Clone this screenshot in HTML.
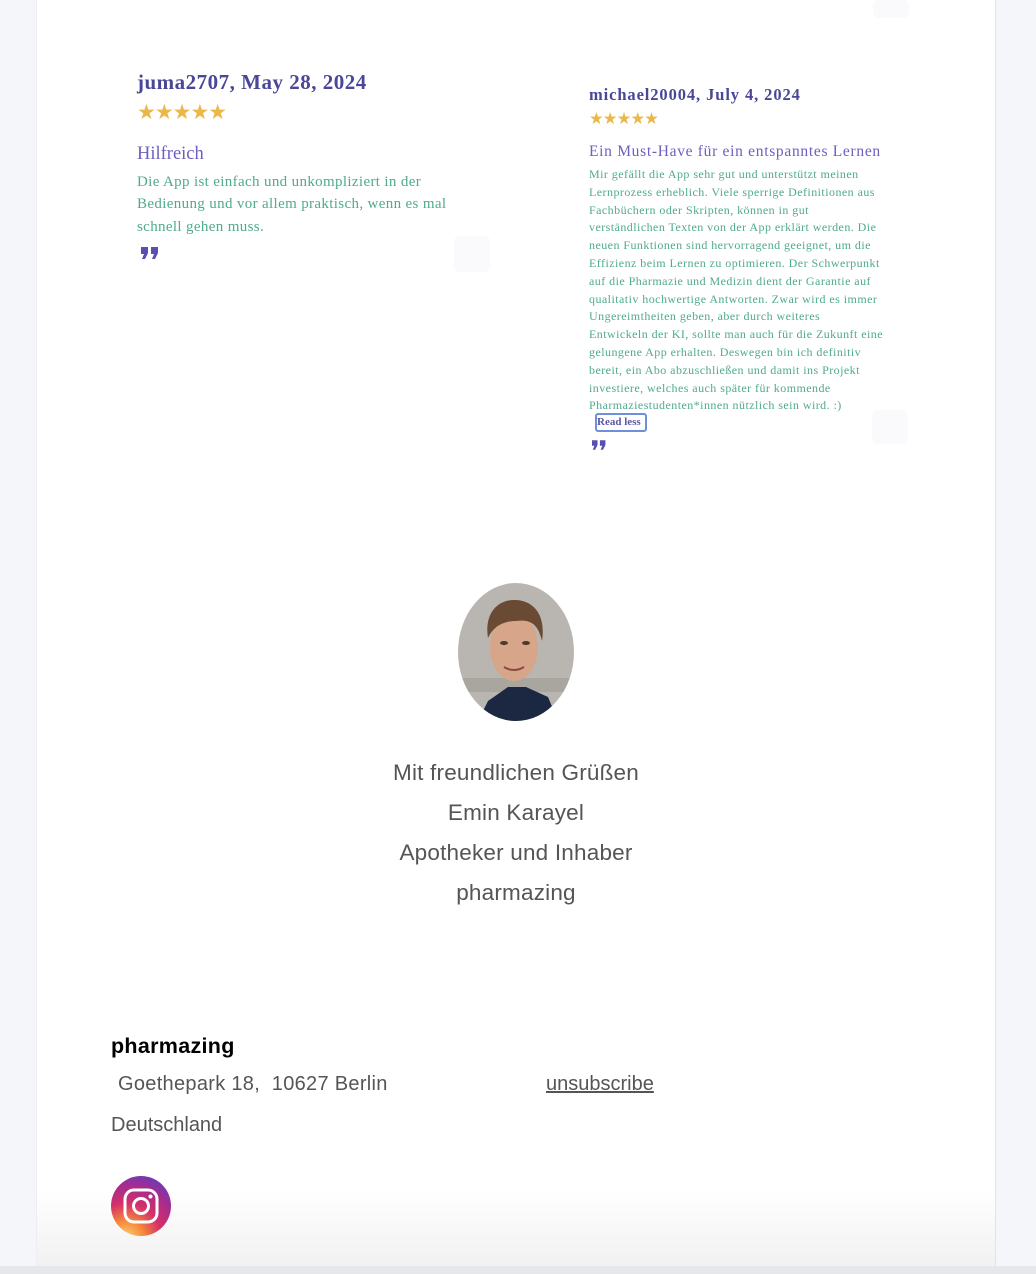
<!DOCTYPE html>
<html><head><meta charset="utf-8"><style>
*{margin:0;padding:0;box-sizing:border-box}
html,body{width:1036px;height:1274px;overflow:hidden;background:#f5f6fa;position:relative}
.main{position:absolute;left:36px;top:0;width:960px;height:1266px;background:linear-gradient(#fff 0,#fff 1190px,#f1f1f2 1266px);border-right:1px solid #e3e4ea;border-left:1px solid #eceef2}
.bar{position:absolute;left:0;top:1266px;width:1036px;height:8px;background:#e6e7eb}
.serif{font-family:"Liberation Serif",serif}
.abs{position:absolute;white-space:nowrap}
.h{color:#4a4797;font-weight:bold}
.t{color:#6b5fc0}
.g{color:#4faa8f}
.stars{color:#eab84a;letter-spacing:-1px}
.sans{font-family:"Liberation Sans",sans-serif;color:#555}
.ghost{position:absolute;background:#fafafc;border-radius:6px}
</style></head><body>
<div class="main"></div>
<div class="bar"></div>
<div class="ghost" style="left:873px;top:0;width:36px;height:18px"></div>

<div class="abs serif h" style="left:137px;top:70px;font-size:21px;letter-spacing:0.5px">juma2707, May 28, 2024</div>
<div class="abs stars" style="left:137px;top:100px;font-size:21px">★★★★★</div>
<div class="abs serif t" style="left:137px;top:144px;font-size:18.5px">Hilfreich</div>
<div class="abs serif g" style="left:137px;top:171px;font-size:15px;line-height:22.3px;letter-spacing:0.35px">Die App ist einfach und unkompliziert in der<br>Bedienung und vor allem praktisch, wenn es mal<br>schnell gehen muss.</div>
<svg class="abs" style="left:141px;top:247px" width="19" height="12" viewBox="0 0 19 12"><path d="M0 0h7v6l-3 6h-3l2-5h-3zM10 0h7v6l-3 6h-3l2-5h-3z" fill="#5a4fb0"/></svg>
<div class="ghost" style="left:454px;top:236px;width:36px;height:36px"></div>

<div class="abs serif h" style="left:589px;top:85px;font-size:16.5px;letter-spacing:0.9px">michael20004, July 4, 2024</div>
<div class="abs stars" style="left:589px;top:109px;font-size:16.5px">★★★★★</div>
<div class="abs serif t" style="left:589px;top:143px;font-size:15.5px;letter-spacing:0.7px">Ein Must-Have für ein entspanntes Lernen</div>
<div class="abs serif g" style="left:589px;top:166px;font-size:12px;line-height:17.8px;letter-spacing:0.45px">Mir gefällt die App sehr gut und unterstützt meinen<br>Lernprozess erheblich. Viele sperrige Definitionen aus<br>Fachbüchern oder Skripten, können in gut<br>verständlichen Texten von der App erklärt werden. Die<br>neuen Funktionen sind hervorragend geeignet, um die<br>Effizienz beim Lernen zu optimieren. Der Schwerpunkt<br>auf die Pharmazie und Medizin dient der Garantie auf<br>qualitativ hochwertige Antworten. Zwar wird es immer<br>Ungereimtheiten geben, aber durch weiteres<br>Entwickeln der KI, sollte man auch für die Zukunft eine<br>gelungene App erhalten. Deswegen bin ich definitiv<br>bereit, ein Abo abzuschließen und damit ins Projekt<br>investiere, welches auch später für kommende<br>Pharmaziestudenten*innen nützlich sein wird. :)</div>
<div class="abs serif" style="left:595px;top:413px;width:52px;height:19px;border:2px solid #6f8fdc;border-radius:3px;font-size:11px;font-weight:bold;color:#5a56a8;line-height:15px;padding-left:0">Read less</div>
<svg class="abs" style="left:592px;top:440px" width="15" height="10" viewBox="0 0 19 12"><path d="M0 0h7v6l-3 6h-3l2-5h-3zM10 0h7v6l-3 6h-3l2-5h-3z" fill="#5a4fb0"/></svg>
<div class="ghost" style="left:872px;top:410px;width:36px;height:34px"></div>

<svg class="abs" style="left:458px;top:583px" width="116" height="138" viewBox="0 0 116 138">
<defs><clipPath id="c"><ellipse cx="58" cy="69" rx="58" ry="69"/></clipPath></defs>
<g clip-path="url(#c)">
<rect width="116" height="138" fill="#b9b6b1"/>
<rect y="95" width="116" height="14" fill="#a9a59f"/>
<path d="M20 138 L30 118 L50 104 L68 104 L90 114 L100 138Z" fill="#1c2842"/>
<ellipse cx="56" cy="64" rx="24" ry="34" fill="#d6a58a"/>
<path d="M30 55 C26 30 40 16 58 17 C76 18 88 32 84 58 C80 42 74 36 58 38 C44 38 35 44 30 55Z" fill="#6b4a33"/>
<path d="M46 84 Q56 90 66 84" stroke="#8a4b3e" stroke-width="2" fill="none"/>
<ellipse cx="46" cy="60" rx="4" ry="2" fill="#4b3a30"/><ellipse cx="68" cy="60" rx="4" ry="2" fill="#4b3a30"/>
</g></svg>

<div class="abs sans" style="left:0;width:1032px;top:753px;text-align:center;font-size:22.5px;letter-spacing:0.2px;line-height:40px;color:#555">Mit freundlichen Grüßen<br>Emin Karayel<br>Apotheker und Inhaber<br>pharmazing</div>

<div class="abs" style="left:111px;top:1034px;font-family:'Liberation Sans',sans-serif;font-weight:bold;font-size:21.5px;color:#000;letter-spacing:0.3px">pharmazing</div>
<div class="abs sans" style="left:118px;top:1073px;font-size:20px;letter-spacing:0.3px">Goethepark 18,&nbsp; 10627 Berlin</div>
<div class="abs sans" style="left:546px;top:1073px;font-size:20px;text-decoration:underline">unsubscribe</div>
<div class="abs sans" style="left:111px;top:1114px;font-size:20px">Deutschland</div>

<svg class="abs" style="left:111px;top:1176px" width="60" height="60" viewBox="0 0 60 60">
<defs><radialGradient id="ig" cx="0.25" cy="1.05" r="1.2"><stop offset="0" stop-color="#fdd67a"/><stop offset="0.25" stop-color="#f58a3a"/><stop offset="0.5" stop-color="#d52f6a"/><stop offset="0.75" stop-color="#a42c8f"/><stop offset="1" stop-color="#5a3fc4"/></radialGradient></defs>
<circle cx="30" cy="30" r="30" fill="url(#ig)"/>
<rect x="14" y="14" width="32" height="32" rx="9" fill="none" stroke="#fff" stroke-width="3"/>
<circle cx="30" cy="30" r="7.5" fill="none" stroke="#fff" stroke-width="3"/>
<circle cx="39.5" cy="20.5" r="2" fill="#fff"/>
</svg>
</body></html>
